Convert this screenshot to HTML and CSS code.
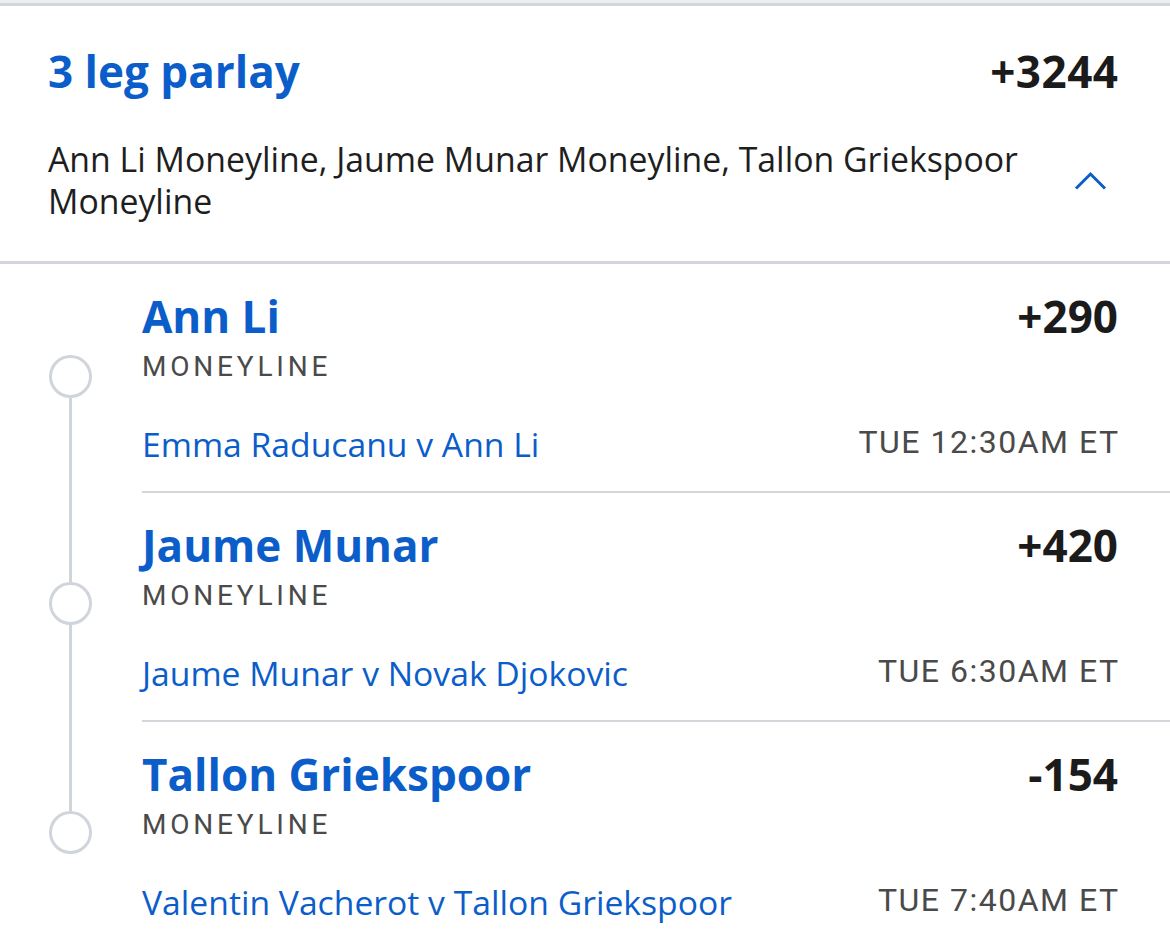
FILE: index.html
```html
<!DOCTYPE html>
<html lang="en">
<head>
<meta charset="utf-8">
<title>3 leg parlay</title>
<link rel="stylesheet" href="styles.css">
</head>
<body>
<div class="top-strip"></div>
<section class="parlay">
  <header class="parlay-head">
    <div class="title-row">
      <h1 class="title">3 leg parlay</h1>
      <span class="odds">+3244</span>
    </div>
    <div class="summary-row">
      <p class="summary">Ann Li Moneyline, Jaume Munar Moneyline, Tallon Griekspoor Moneyline</p>
      <button class="toggle" aria-label="Collapse">
        <svg width="33" height="19" viewBox="0 0 33 19"><polyline points="2,17.5 16.5,3 31,17.5" fill="none" stroke="#0b5ec9" stroke-width="3"/></svg>
      </button>
    </div>
  </header>

  <div class="legs">
    <div class="leg first">
      <div class="rail"><span class="seg seg-top"></span><span class="dot"></span><span class="seg seg-bottom"></span></div>
      <div class="leg-body">
        <div class="name-row"><span class="name">Ann Li</span><span class="leg-odds">+290</span></div>
        <div class="market">MONEYLINE</div>
        <div class="game-row"><a class="game">Emma Raducanu v Ann Li</a><span class="time">TUE 12:30AM ET</span></div>
      </div>
    </div>
    <div class="leg">
      <div class="rail"><span class="seg seg-top"></span><span class="dot"></span><span class="seg seg-bottom"></span></div>
      <div class="leg-body">
        <div class="name-row"><span class="name">Jaume Munar</span><span class="leg-odds">+420</span></div>
        <div class="market">MONEYLINE</div>
        <div class="game-row"><a class="game">Jaume Munar v Novak Djokovic</a><span class="time">TUE 6:30AM ET</span></div>
      </div>
    </div>
    <div class="leg last">
      <div class="rail"><span class="seg seg-top"></span><span class="dot"></span><span class="seg seg-bottom"></span></div>
      <div class="leg-body">
        <div class="name-row"><span class="name">Tallon Griekspoor</span><span class="leg-odds">-154</span></div>
        <div class="market">MONEYLINE</div>
        <div class="game-row"><a class="game">Valentin Vacherot v Tallon Griekspoor</a><span class="time">TUE 7:40AM ET</span></div>
      </div>
    </div>
  </div>
</section>
</body>
</html>
```
FILE: styles.css
```css
* { box-sizing: border-box; }
html, body { margin: 0; padding: 0; background: #ffffff; }
body { font-family: "Open Sans", "Lato", "Liberation Sans", sans-serif; color: #1b1b1b; overflow: hidden; }

.top-strip { height: 3px; background: #eceef2; }

.parlay { border-top: 3px solid #d2d6dc; }

.parlay-head {
  padding: 39px 52px 39px 48px;
  border-bottom: 3px solid #d2d6dc;
}
.title-row { display: flex; justify-content: space-between; align-items: baseline; }
.title { margin: 0; font-size: 44px; line-height: 52px; font-weight: 700; color: #0b5ec9; }
.odds { font-size: 44px; line-height: 52px; font-weight: 700; color: #1b1b1b; letter-spacing: 0.5px; margin-right: -0.5px; }

.summary-row { display: flex; align-items: center; margin-top: 41px; gap: 8px; }
.summary { flex: 1; margin: 0; font-size: 33.8px; line-height: 42px; font-weight: 400; color: #1e1e1e; }
.toggle { flex: none; width: 52px; height: 40px; padding: 0 0 0 8px; border: 0; background: none; display: flex; align-items: center; justify-content: flex-start; }
.toggle svg { display: block; }

.legs { display: flex; flex-direction: column; }
.leg { display: flex; }
.rail { flex: none; width: 142px; display: flex; flex-direction: column; }
.seg { display: block; width: 3px; margin-left: 69px; background: #d0d4db; }
.seg-top { height: 91px; flex: none; }
.seg-bottom { flex: 1; }
.leg.first .seg-top, .leg.last .seg-bottom { background: transparent; }
.dot { display: block; flex: none; width: 43px; height: 43px; margin-left: 49px; border: 3px solid #d0d4db; border-radius: 50%; }

.leg-body { flex: 1; padding: 28px 52px 27px 0; border-top: 2px solid #d3d6db; }
.leg.first .leg-body { border-top: 0; }

.name-row { display: flex; justify-content: space-between; align-items: baseline; }
.name { font-size: 44px; line-height: 48px; font-weight: 700; color: #0b5ec9; }
.leg-odds { font-size: 44px; line-height: 48px; font-weight: 700; color: #1b1b1b; }

.market { margin-top: 11px; font-family: "Roboto", "Liberation Sans", sans-serif; font-size: 28px; line-height: 32px; letter-spacing: 3.8px; color: #4a4a4a; }

.game-row { display: flex; justify-content: space-between; align-items: flex-start; margin-top: 41px; }
.game { font-size: 33.7px; line-height: 40px; color: #0b5ec9; text-decoration: none; }
.time { font-family: "Roboto", "Liberation Sans", sans-serif; font-size: 32px; line-height: 36px; letter-spacing: 1.5px; color: #4a4a4a; margin-right: -1.5px; }
```
